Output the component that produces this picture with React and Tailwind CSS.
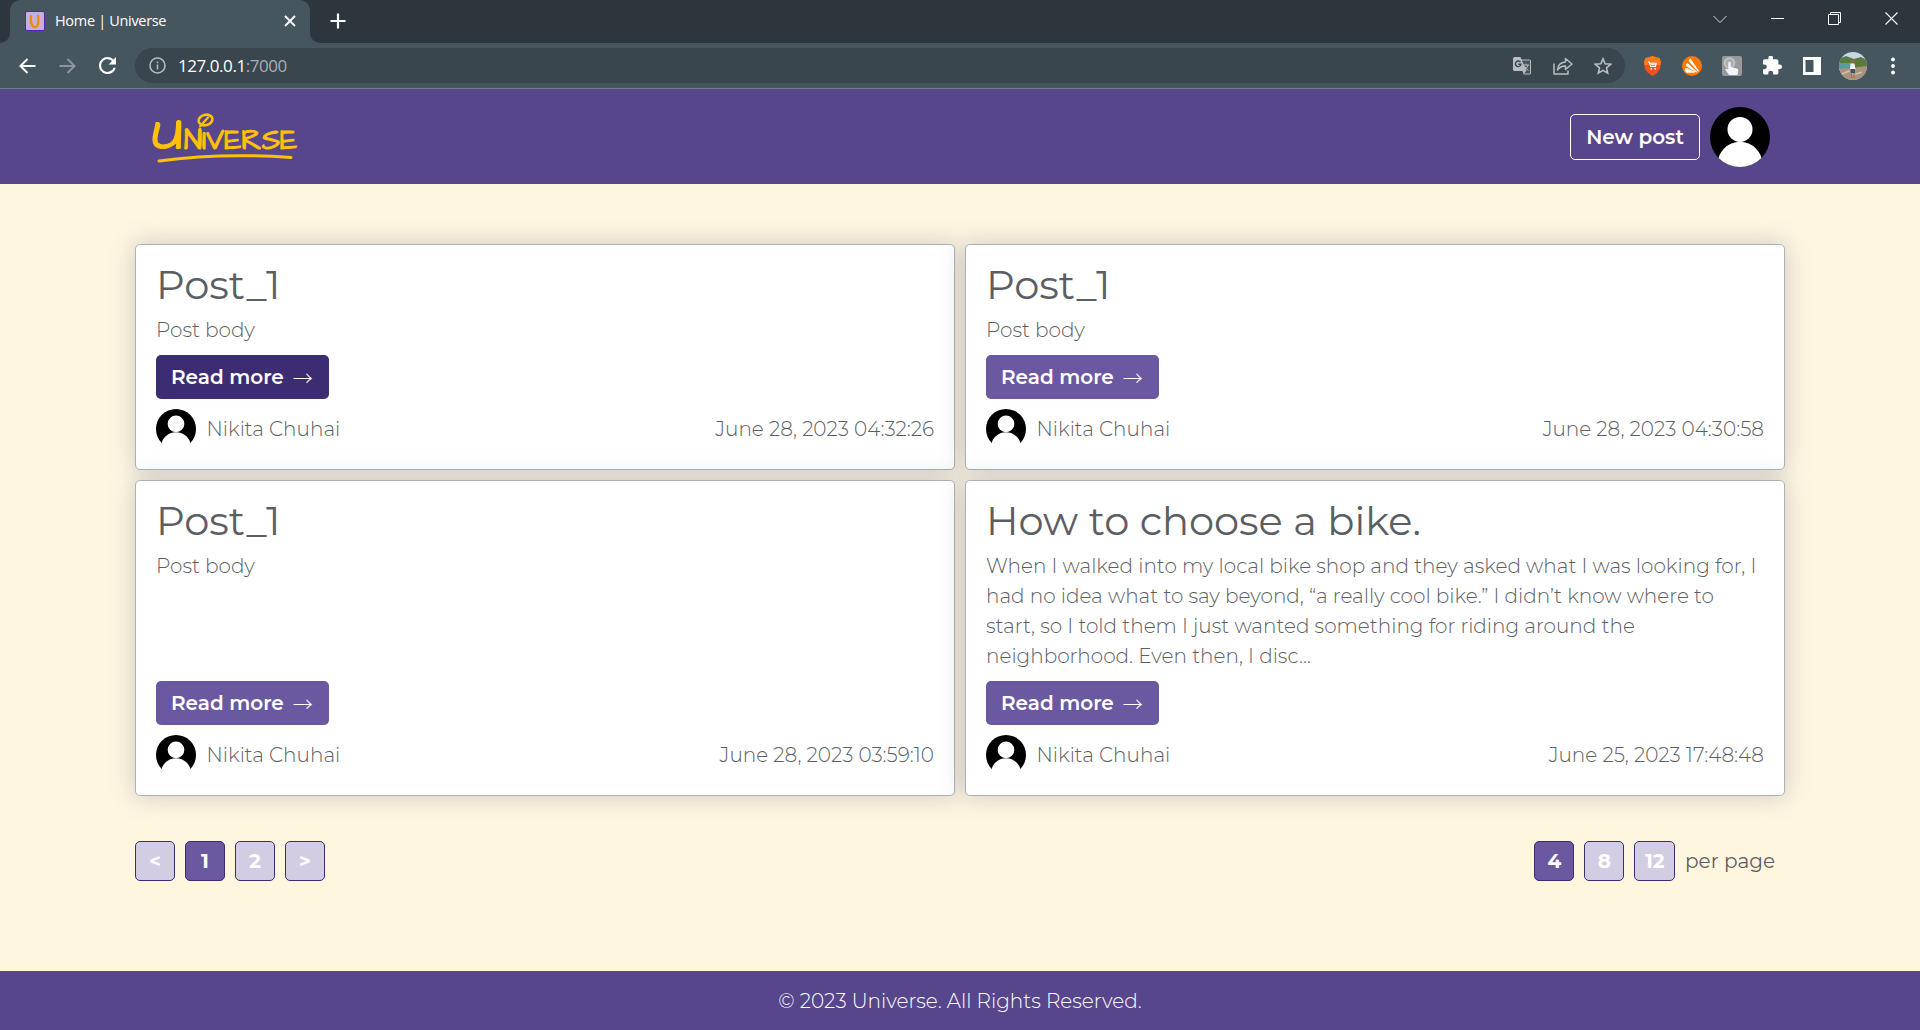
import { useId } from "react";

function Avatar({ className, open }) {
  const id = useId();
  return (
    <svg viewBox="0 0 60 60" className={className}>
      <clipPath id={id}>
        <circle cx="30" cy="30" r="30" />
      </clipPath>
      <circle cx="30" cy="30" r="30" fill="#000" />
      <g clipPath={open ? undefined : `url(#${id})`}>
        <circle cx="30" cy="22.4" r="12.5" fill="#fff" />
        <ellipse cx="30" cy="57.5" rx="22.5" ry="22.8" fill="#fff" />
      </g>
    </svg>
  );
}

function Logo() {
  return (
    <svg
      viewBox="0 0 150 60"
      className="mb-[1px] h-[60px] w-[150px] overflow-visible fill-[#ffc107] stroke-[#ffc107] font-['Architects_Daughter','Comic_Neue','Montserrat',sans-serif]"
    >
      <text x="2" y="43" fontSize="47" strokeWidth="1" textLength="31" lengthAdjust="spacingAndGlyphs">U</text>
      <text x="34" y="43" fontSize="29" strokeWidth="1" textLength="113" lengthAdjust="spacingAndGlyphs">NIVERSE</text>
      <g fill="none" strokeLinecap="round">
        <ellipse cx="55.5" cy="14" rx="7" ry="5.2" strokeWidth="2.600" transform="rotate(-14 55.5 14)" />
        <path d="M50 20.500l8-9" strokeWidth="2.200" />
        <path d="M9 55Q70 46.500 141 51.500" strokeWidth="3" />
      </g>
    </svg>
  );
}

function Favicon() {
  return (
    <span className="flex size-5 items-center justify-center rounded-[2px] border border-[#5b21b6] bg-[#c4b0dc] font-['Patrick_Hand','Montserrat',sans-serif] text-[19px] leading-none font-bold text-[#f08c00]">
      U
    </span>
  );
}

function BrowserChrome() {
  return (
    <div className="h-[89px] border-b border-[#6b8088] bg-[#45565f] font-['Open_Sans','Noto_Sans',sans-serif] font-normal">
      <div className="flex h-[43px] bg-[#2c363c]">
        <div className="flex w-[10px] items-end bg-[#45565f]">
          <div className="h-full w-full rounded-br-[10px] bg-[#2c363c]" />
        </div>
        <div className="flex w-[300px] items-center rounded-t-[10px] bg-[#45565f] pr-[13px] pb-[1px] pl-[15px]">
          <Favicon />
          <span className="ml-[10px] flex-1 text-[14.500px] tracking-[-0.320px] whitespace-nowrap text-white">
            Home | Universe
          </span>
          <svg viewBox="0 0 14 14" className="size-[14px]" fill="none" stroke="#fff" strokeWidth="1.800">
            <path d="M2 2l10 10M12 2L2 12" />
          </svg>
        </div>
        <div className="flex flex-1 bg-[#45565f]">
          <div className="flex flex-1 items-center rounded-bl-[10px] bg-[#2c363c] pl-[20px]">
            <svg viewBox="0 0 16 16" className="mb-[1px] size-4" fill="none" stroke="#fff" strokeWidth="2.200">
              <path d="M8 .5v15M.5 8h15" />
            </svg>
            <div className="mr-[22px] mb-[6px] ml-auto flex items-center gap-[44px]">
              <svg viewBox="0 0 14 14" className="size-[14px]" fill="none" stroke="#d5d8da" strokeWidth="1">
                <path d="M.5 4L7 10.500 13.500 4" />
              </svg>
              <svg viewBox="0 0 13 13" className="size-[13px]" fill="none" stroke="#fff" strokeWidth="1">
                <path d="M0 6.500h13" />
              </svg>
              <svg viewBox="0 0 13 13" className="size-[13px]" fill="none" stroke="#fff" strokeWidth="1">
                <path d="M.5 2.500h10v10H.5zM2.500 2.500v-2h10v10h-2" />
              </svg>
              <svg viewBox="0 0 13 13" className="size-[13px]" fill="none" stroke="#fff" strokeWidth="1.100">
                <path d="M.5.5l12 12M12.500.5l-12 12" />
              </svg>
            </div>
          </div>
        </div>
      </div>

      <div className="flex h-[45px] items-center pl-[19px]">
        <svg viewBox="0 0 17 16" className="h-4 w-[17px]" fill="none" stroke="#fff" strokeWidth="2">
          <path d="M16.500 8H1.500M8.500 1L1.500 8l7 7" />
        </svg>
        <svg viewBox="0 0 17 16" className="ml-[23px] h-4 w-[17px]" fill="none" stroke="#8b979d" strokeWidth="2">
          <path d="M.5 8h15M8.500 1l7 7-7 7" />
        </svg>
        <svg viewBox="4 4 16 16" className="ml-[23px] size-[17px]" fill="#fff">
          <path d="M17.650 6.350A7.960 7.960 0 0 0 12 4a8 8 0 1 0 7.730 10h-2.080A6 6 0 1 1 12 6c1.660 0 3.140.690 4.220 1.780L13 11h7V4l-2.350 2.350z" />
        </svg>
        <div className="ml-[19px] flex h-[35px] w-[1490px] items-center rounded-full bg-[#39464d] pr-[13px] pl-[14px]">
          <svg viewBox="0 0 17 17" className="size-[17px]" fill="none" stroke="#b4bbbf" strokeWidth="1.600">
            <circle cx="8.500" cy="8.500" r="7.500" />
            <path d="M8.500 7.500v5M8.500 4.500v1.800" />
          </svg>
          <span className="ml-[12px] text-[17px] tracking-[-0.450px] text-white">
            127.0.0.1<span className="text-[#a7b0b5]">:7000</span>
          </span>
          <div className="ml-auto flex items-center gap-[21px] text-[#b9bdc0]">
            <svg viewBox="0 0 19 18" className="h-[18px] w-[19px]">
              <path d="M1.500 0h6l1 2.500h8A1.500 1.500 0 0 1 18 4v12a1.500 1.500 0 0 1-1.500 1.500h-6L9.500 14h-8A1.500 1.500 0 0 1 0 12.500v-11A1.500 1.500 0 0 1 1.500 0z" fill="#b9bdc0" />
              <path d="M9 3.500h8v13h-6l2.500-3z" fill="#46535a" />
              <path d="M7.500 5.200A2.800 2.800 0 1 0 8 7.200H5.300" fill="none" stroke="#39464d" strokeWidth="1.400" />
              <path d="M10.500 8h5.500M13.200 6.500V8M15 8q-1 3.500-3.500 5M11.800 9.500q1.200 2.500 3.700 4" fill="none" stroke="#b9bdc0" />
            </svg>
            <svg viewBox="0 0 20 18" className="h-[18px] w-5" fill="none" stroke="currentColor" strokeWidth="1.500" strokeLinejoin="round">
              <path d="M1 6.500V17h14v-3.500" />
              <path d="M4.500 13Q5 5.500 12.500 5V1.500L19 7l-6.500 5.500V9Q7.500 8.800 4.500 13z" />
            </svg>
            <svg viewBox="0 0 18 18" className="size-[18px]" fill="none" stroke="currentColor" strokeWidth="1.600">
              <path d="M9 1.800l2.100 5 5.500.5-4.100 3.600 1.200 5.300L9 13.400l-4.700 2.800 1.200-5.300-4.100-3.600 5.500-.5z" />
            </svg>
          </div>
        </div>

        <div className="ml-[18px] flex items-center">
          <svg viewBox="0 0 19 20" className="h-5 w-[19px]">
            <path d="M5 1.500L9.500 0 14 1.500l2.500.5L18 6l-1 7-3 4-4.500 3L5 17l-3-4L1 6l1.500-4z" fill="#f4511e" />
            <path d="M5 1.500L9.500 0 14 1.500l2.500.5L18 6l-.5 3H1.500L1 6l1.500-4z" fill="#fb7a1b" />
            <path d="M5 6h1.300l1.300 4.500h4.900l.8-3.300H6.700M8 8.800h5" fill="none" stroke="#fff" strokeWidth="1.100" />
            <circle cx="8.200" cy="12.800" r=".9" fill="#fff" />
            <circle cx="12.200" cy="12.800" r=".9" fill="#fff" />
          </svg>
          <svg viewBox="0 0 20 20" className="ml-[20px] size-5">
            <circle cx="10" cy="10" r="10" fill="#ff7800" />
            <path d="M7.200 3.200q1.300-1 2.100.5L17 15 16 15.800 7.200 5.600q-.9-1.300 0-2.400z" fill="#fff" />
            <path d="M4.200 7.800q1.200-1 2.300.1L15.300 16l-.9.600L4.500 10.200q-1.200-1.200-.3-2.400z" fill="#fff" />
            <path d="M2.800 13q.6-1.300 2-.9l8.200 3.600-.3 1H4.600Q2.400 15.500 2.800 13z" fill="#fff" />
          </svg>
          <svg viewBox="0 0 20 20" className="ml-[20px] size-5">
            <rect width="20" height="20" rx="2" fill="#97999b" />
            <circle cx="7.500" cy="7" r="5" fill="#aaacad" stroke="#c6c8c9" strokeWidth="1.500" />
            <path d="M6.300 7q0-1.300 1.200-1.300T8.800 7v4l6 1.500q1.700.5 1.500 2l-.8 4.500H7L3.300 13.500q.5-1.300 3 0z" fill="#f1f5f8" />
          </svg>
          <svg viewBox="2 1.500 21 21" className="ml-[21px] size-[19px]" fill="#fff">
            <path d="M20.500 11H19V7c0-1.100-.9-2-2-2h-4V3.500a2.500 2.500 0 0 0-5 0V5H4c-1.100 0-2 .9-2 2v3.800h1.500a2.700 2.700 0 0 1 0 5.400H2V20c0 1.100.9 2 2 2h3.800v-1.500a2.700 2.700 0 0 1 5.400 0V22H17c1.100 0 2-.9 2-2v-4h1.500a2.500 2.500 0 0 0 0-5z" />
          </svg>
          <svg viewBox="0 0 18 18" className="ml-[21px] size-[18px]">
            <path fillRule="evenodd" d="M0 0h18v18H0zM2.500 3v12h8V3z" fill="#fff" />
          </svg>
          <svg viewBox="0 0 28 28" className="ml-[18px] size-7">
            <clipPath id="profile">
              <circle cx="14" cy="14" r="14" />
            </clipPath>
            <g clipPath="url(#profile)">
              <rect width="28" height="28" fill="#c3d9ea" />
              <path d="M0 7l7-3 8 3 7-2 6 3v8H0z" fill="#5c7a3d" />
              <path d="M0 11h14v6H0z" fill="#5b9aa3" />
              <path d="M0 17l12-1 16-2v14H0z" fill="#a8957c" />
              <path d="M3 22l7-3 5 4 8-3" fill="none" stroke="#d0c3ac" strokeWidth="1.500" />
              <circle cx="13.500" cy="9.500" r="1.700" fill="#9a6546" />
              <path d="M11.500 11.500h4l1 6h-5.500z" fill="#eef3f8" />
              <path d="M11.500 17h4.500v4h-4.500z" fill="#3e5268" />
              <path d="M12.500 21v5M15 21v5" stroke="#a06c4c" strokeWidth="1.200" />
            </g>
          </svg>
          <svg viewBox="0 0 4 18" className="ml-[24px] h-[18px] w-1" fill="#fff">
            <circle cx="2" cy="2.500" r="1.900" />
            <circle cx="2" cy="9" r="1.900" />
            <circle cx="2" cy="15.500" r="1.900" />
          </svg>
        </div>
      </div>
    </div>
  );
}

const posts = [
  { title: "Post_1", body: "Post body", date: "June 28, 2023 04:32:26", active: true },
  { title: "Post_1", body: "Post body", date: "June 28, 2023 04:30:58" },
  { title: "Post_1", body: "Post body", date: "June 28, 2023 03:59:10" },
  {
    title: "How to choose a bike.",
    body: "When I walked into my local bike shop and they asked what I was looking for, I had no idea what to say beyond, “a really cool bike.” I didn’t know where to start, so I told them I just wanted something for riding around the neighborhood. Even then, I disc...",
    date: "June 25, 2023 17:48:48",
  },
];

function PostCard({ title, body, date, active }) {
  return (
    <article className="flex flex-col rounded-[5px] border border-[#adb0b5] bg-white px-5 pt-[16px] pb-5 shadow-[0_0_25px_rgba(105,118,150,0.35)]">
      <h2 className="text-[40px] leading-[48px] font-normal">{title}</h2>
      <p className="mt-[6px] flex-1">{body}</p>
      <a
        className={`mt-[9px] flex h-[44px] w-[173px] shrink-0 items-center rounded-[5px] pl-[15px] font-semibold text-white ${active ? "bg-[#3c2c72]" : "bg-[#6a58a1]"}`}
      >
        Read more
        <span className="mt-[2px] ml-[9px] font-['Noto_Sans_CJK_JP',sans-serif] font-light">→</span>
      </a>
      <div className="mt-[10px] flex h-[40px] items-center">
        <Avatar className="size-10" open />
        <span className="ml-[10.500px]">Nikita Chuhai</span>
        <time className="ml-auto">{date}</time>
      </div>
    </article>
  );
}

function PageButton({ children, active }) {
  return (
    <a
      className={`flex h-10 min-w-10 items-center justify-center rounded-[5px] border border-[#3c2c72] px-[9.500px] font-bold text-white ${active ? "bg-[#6a58a1]" : "bg-[#d3cde3]"}`}
    >
      {children}
    </a>
  );
}

export default function App() {
  return (
    <div className="flex h-[1030px] w-[1920px] flex-col overflow-hidden bg-[#fff6e0] font-['Montserrat','Lato',sans-serif] text-[20px] leading-[30px] font-light text-[#5b5e63]">
      <BrowserChrome />
      <header className="flex h-[95px] shrink-0 items-center justify-between bg-[#58468c] px-[150px]">
        <Logo />
        <div className="flex items-center gap-[10px]">
          <a className="flex h-[46px] w-[130px] items-center justify-center rounded-[5px] border border-white font-semibold text-white">
            New post
          </a>
          <Avatar className="size-[60px]" />
        </div>
      </header>

      <main className="flex-1 px-[135px] pt-[60px]">
        <div className="grid grid-cols-2 grid-rows-[226px_316px] gap-[10px]">
          {posts.map((post) => (
            <PostCard key={post.date} {...post} />
          ))}
        </div>
        <div className="mt-[45px] flex items-center justify-between">
          <nav className="flex gap-[10px]">
            <PageButton>&lt;</PageButton>
            <PageButton active>1</PageButton>
            <PageButton>2</PageButton>
            <PageButton>&gt;</PageButton>
          </nav>
          <div className="flex items-center gap-[10px] pr-[10px]">
            <PageButton active>4</PageButton>
            <PageButton>8</PageButton>
            <PageButton>12</PageButton>
            <span className="font-normal">per page</span>
          </div>
        </div>
      </main>

      <footer className="flex h-[59px] shrink-0 items-center justify-center bg-[#58468c] text-white">
        © 2023 Universe. All Rights Reserved.
      </footer>
    </div>
  );
}
